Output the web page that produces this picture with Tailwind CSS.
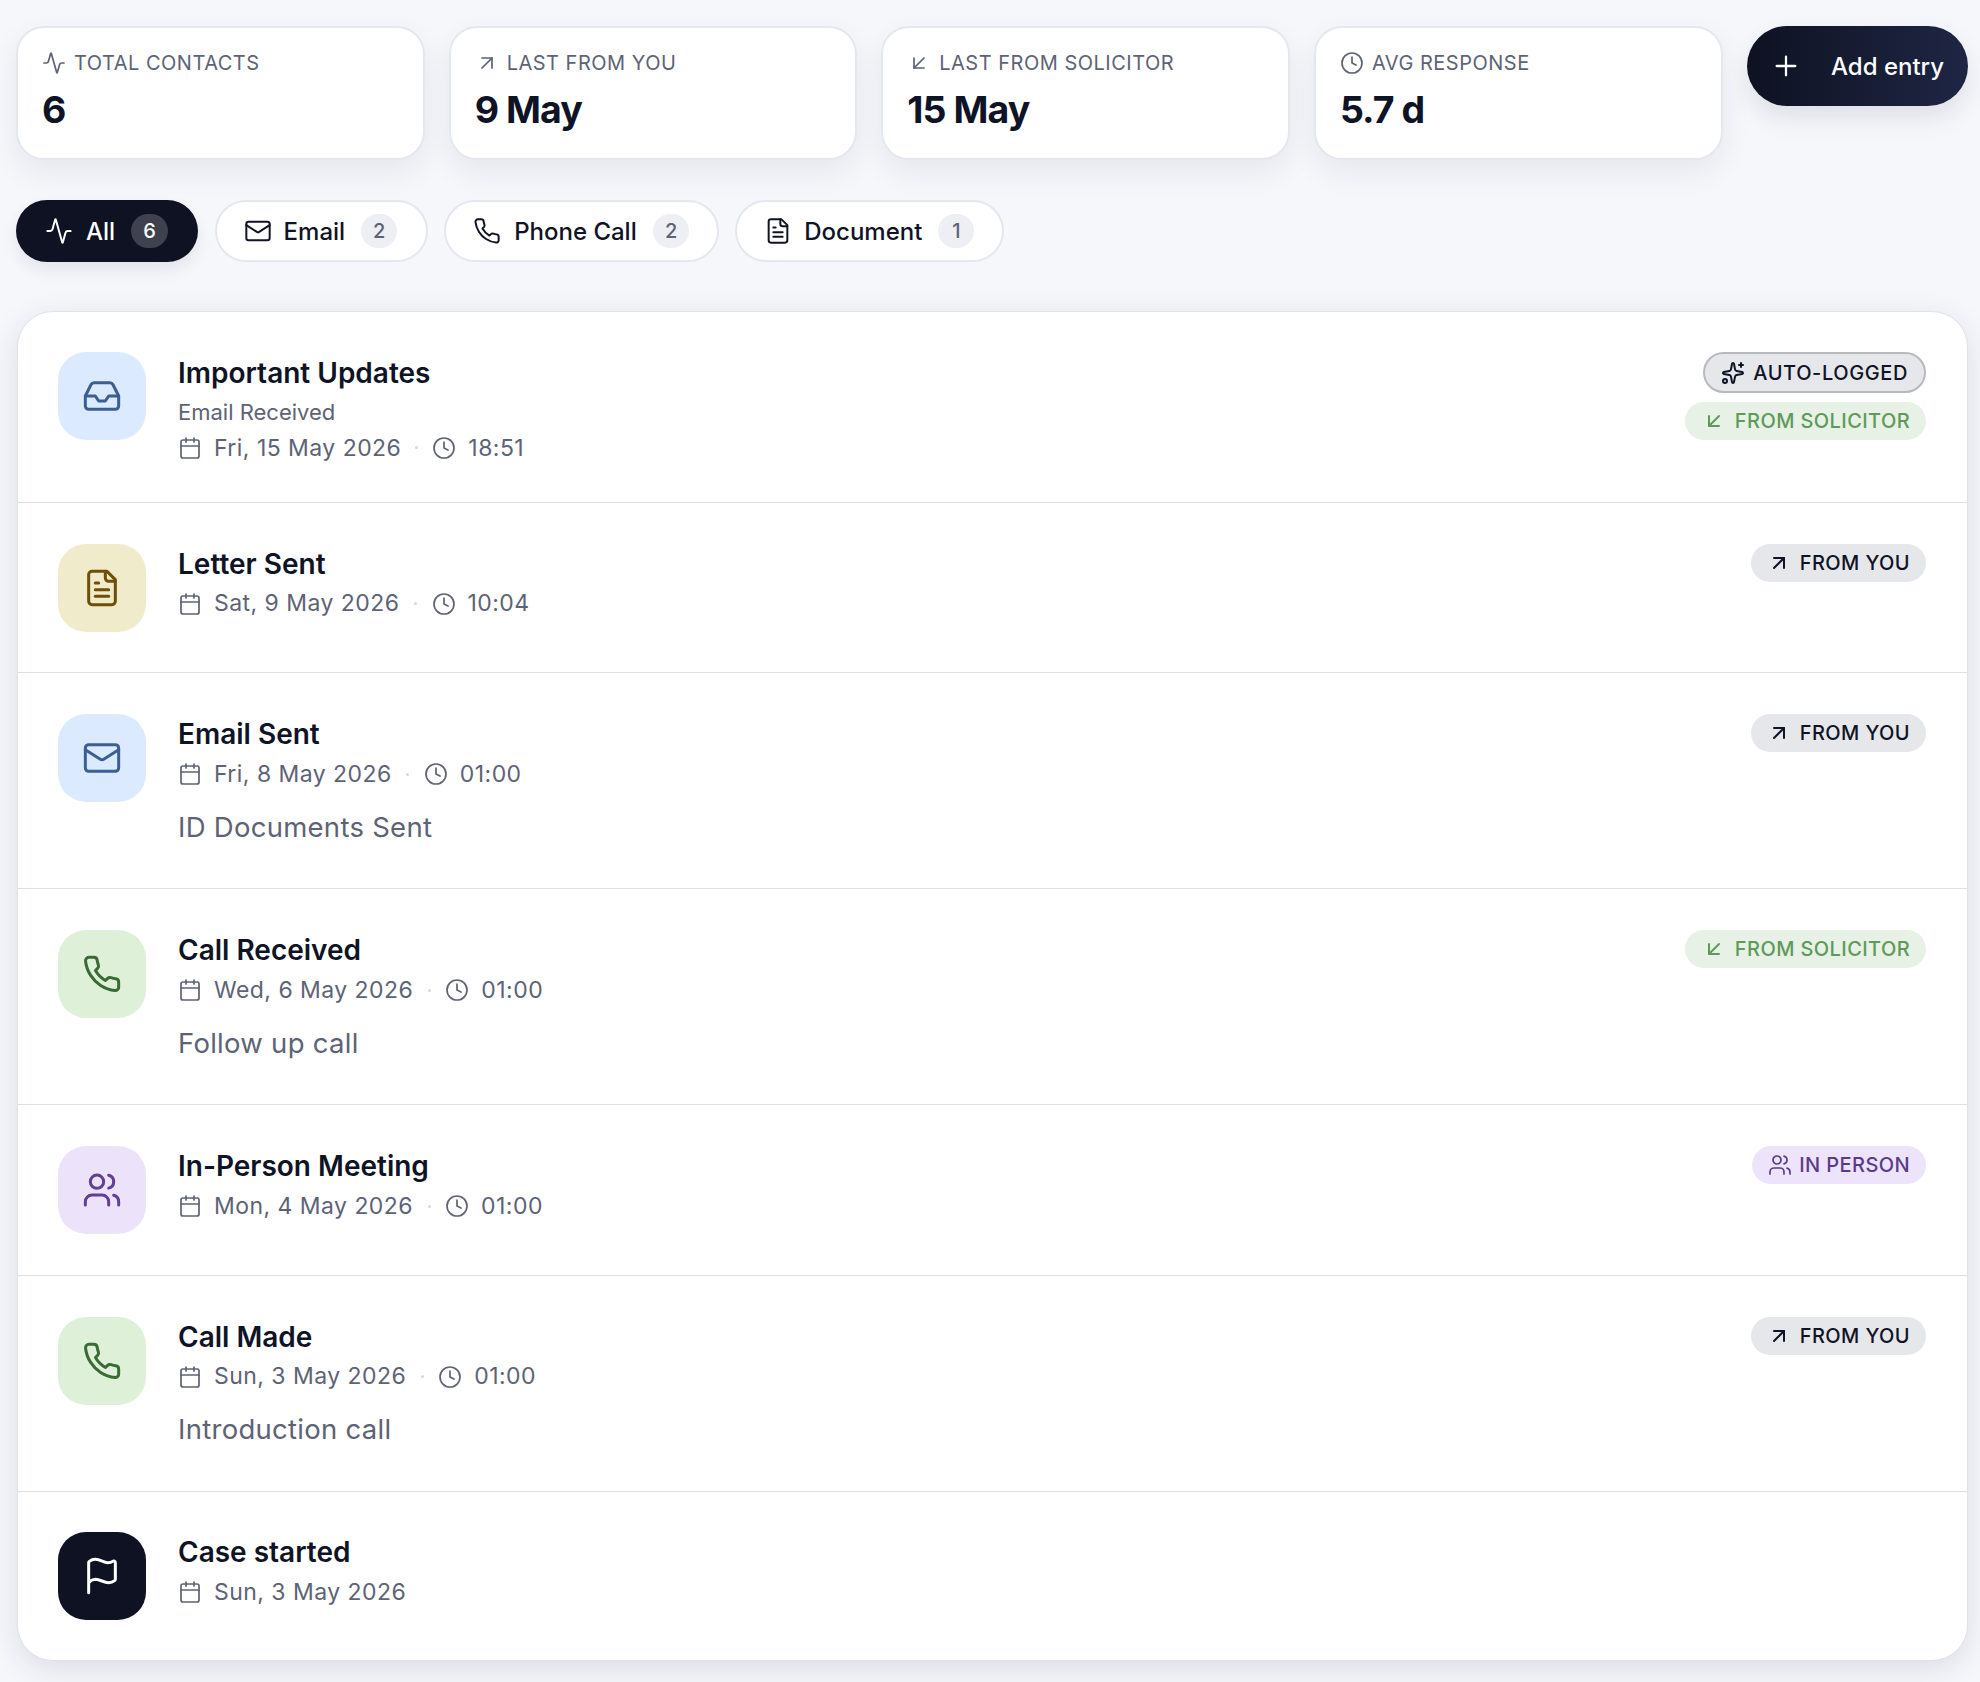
<!doctype html>
<html lang="en">
    <head>
        <meta charset="UTF-8" />
        <title>Contact log</title>
        <script src="https://cdn.jsdelivr.net/npm/@tailwindcss/browser@4"></script>
    </head>
    <body class="bg-[#f6f7fb] font-['Inter',sans-serif] text-[#0f1326]">
        <!-- Icon sprite -->
        <svg class="hidden">
            <defs>
                <symbol id="i-activity" viewBox="0 0 24 24"><path d="M22 12h-2.48a2 2 0 0 0-1.93 1.46l-2.35 8.36a.25.25 0 0 1-.48 0L9.24 2.18a.25.25 0 0 0-.48 0l-2.35 8.36A2 2 0 0 1 4.49 12H2" /></symbol>
                <symbol id="i-up" viewBox="0 0 24 24"><path d="M7 7h10v10" /><path d="M7 17 17 7" /></symbol>
                <symbol id="i-down" viewBox="0 0 24 24"><path d="M17 7 7 17" /><path d="M17 17H7V7" /></symbol>
                <symbol id="i-clock" viewBox="0 0 24 24"><circle cx="12" cy="12" r="10" /><path d="M12 6v6l4 2" /></symbol>
                <symbol id="i-plus" viewBox="0 0 24 24"><path d="M5 12h14" /><path d="M12 5v14" /></symbol>
                <symbol id="i-mail" viewBox="0 0 24 24"><rect x="2" y="4" width="20" height="16" rx="2" /><path d="m22 7-8.97 5.7a1.94 1.94 0 0 1-2.06 0L2 7" /></symbol>
                <symbol id="i-phone" viewBox="0 0 24 24"><path d="M22 16.92v3a2 2 0 0 1-2.18 2 19.79 19.79 0 0 1-8.63-3.07 19.5 19.5 0 0 1-6-6 19.79 19.79 0 0 1-3.07-8.67A2 2 0 0 1 4.11 2h3a2 2 0 0 1 2 1.72 12.84 12.84 0 0 0 .7 2.81 2 2 0 0 1-.45 2.11L8.09 9.91a16 16 0 0 0 6 6l1.27-1.27a2 2 0 0 1 2.11-.45 12.84 12.84 0 0 0 2.81.7A2 2 0 0 1 22 16.92z" /></symbol>
                <symbol id="i-file" viewBox="0 0 24 24"><path d="M15 2H6a2 2 0 0 0-2 2v16a2 2 0 0 0 2 2h12a2 2 0 0 0 2-2V7Z" /><path d="M14 2v4a2 2 0 0 0 2 2h4" /><path d="M10 9H8" /><path d="M16 13H8" /><path d="M16 17H8" /></symbol>
                <symbol id="i-inbox" viewBox="0 0 24 24"><polyline points="22 12 16 12 14 15 10 15 8 12 2 12" /><path d="M5.45 5.11 2 12v6a2 2 0 0 0 2 2h16a2 2 0 0 0 2-2v-6l-3.45-6.89A2 2 0 0 0 16.76 4H7.24a2 2 0 0 0-1.79 1.11z" /></symbol>
                <symbol id="i-calendar" viewBox="0 0 24 24"><path d="M8 2v4" /><path d="M16 2v4" /><rect x="3" y="4" width="18" height="18" rx="2" /><path d="M3 10h18" /></symbol>
                <symbol id="i-sparkles" viewBox="0 0 24 24"><path d="M11.017 2.814a1 1 0 0 1 1.966 0l1.051 5.558a2 2 0 0 0 1.594 1.594l5.558 1.051a1 1 0 0 1 0 1.966l-5.558 1.051a2 2 0 0 0-1.594 1.594l-1.051 5.558a1 1 0 0 1-1.966 0l-1.051-5.558a2 2 0 0 0-1.594-1.594l-5.558-1.051a1 1 0 0 1 0-1.966l5.558-1.051a2 2 0 0 0 1.594-1.594z" /><path d="M20 2v4" /><path d="M22 4h-4" /><circle cx="4" cy="20" r="2" /></symbol>
                <symbol id="i-users" viewBox="0 0 24 24"><path d="M16 21v-2a4 4 0 0 0-4-4H6a4 4 0 0 0-4 4v2" /><circle cx="9" cy="7" r="4" /><path d="M22 21v-2a4 4 0 0 0-3-3.87" /><path d="M16 3.13a4 4 0 0 1 0 7.75" /></symbol>
                <symbol id="i-flag" viewBox="0 0 24 24"><path d="M4 22V4a1 1 0 0 1 .4-.8A6 6 0 0 1 8 2c3 0 5 2 7.333 2q2 0 3.067-.8A1 1 0 0 1 20 4v10a1 1 0 0 1-.4.8A6 6 0 0 1 16 16c-3 0-5-2-8-2a6 6 0 0 0-4 2" /></symbol>
            </defs>
        </svg>

        <div class="pt-[26px] pr-[12px] pb-[22px] pl-[16px]">
            <!-- Stats -->
            <div class="flex items-start gap-[24.5px]">
                <div class="grid flex-1 grid-cols-4 gap-[24px]">
                    <div class="h-[134px] rounded-[28px] border-2 border-[#e5e7ee] bg-white px-[24px] pt-[23px] shadow-[0_12px_30px_rgba(20,25,50,0.07)]">
                        <div class="flex h-[24px] items-center gap-[8px] text-[20px] tracking-[0.025em] text-[#5d6375]">
                            <svg class="h-6 w-6 fill-none stroke-current stroke-[1.7]" stroke-linecap="round" stroke-linejoin="round"><use href="#i-activity" /></svg>
                            <span>TOTAL CONTACTS</span>
                        </div>
                        <div class="mt-[12px] text-[37.5px] leading-[46px] font-bold tracking-tight">6</div>
                    </div>
                    <div class="h-[134px] rounded-[28px] border-2 border-[#e5e7ee] bg-white px-[24px] pt-[23px] shadow-[0_12px_30px_rgba(20,25,50,0.07)]">
                        <div class="flex h-[24px] items-center gap-[8px] text-[20px] tracking-[0.025em] text-[#5d6375]">
                            <svg class="h-6 w-6 fill-none stroke-current stroke-[1.7]" stroke-linecap="round" stroke-linejoin="round"><use href="#i-up" /></svg>
                            <span>LAST FROM YOU</span>
                        </div>
                        <div class="mt-[12px] text-[37.5px] leading-[46px] font-bold tracking-tight">9 May</div>
                    </div>
                    <div class="h-[134px] rounded-[28px] border-2 border-[#e5e7ee] bg-white px-[24px] pt-[23px] shadow-[0_12px_30px_rgba(20,25,50,0.07)]">
                        <div class="flex h-[24px] items-center gap-[8px] text-[20px] tracking-[0.025em] text-[#5d6375]">
                            <svg class="h-6 w-6 fill-none stroke-current stroke-[1.7]" stroke-linecap="round" stroke-linejoin="round"><use href="#i-down" /></svg>
                            <span>LAST FROM SOLICITOR</span>
                        </div>
                        <div class="mt-[12px] text-[37.5px] leading-[46px] font-bold tracking-tight">15 May</div>
                    </div>
                    <div class="h-[134px] rounded-[28px] border-2 border-[#e5e7ee] bg-white px-[24px] pt-[23px] shadow-[0_12px_30px_rgba(20,25,50,0.07)]">
                        <div class="flex h-[24px] items-center gap-[8px] text-[20px] tracking-[0.025em] text-[#5d6375]">
                            <svg class="h-6 w-6 fill-none stroke-current stroke-[1.7]" stroke-linecap="round" stroke-linejoin="round"><use href="#i-clock" /></svg>
                            <span>AVG RESPONSE</span>
                        </div>
                        <div class="mt-[12px] text-[37.5px] leading-[46px] font-bold tracking-tight">5.7 d</div>
                    </div>
                </div>
                <button class="flex h-[80px] w-[221px] items-center gap-[29px] rounded-[40px] bg-gradient-to-r from-[#0e1222] to-[#1f2644] pl-[23px] text-[24px] font-medium text-white shadow-[0_12px_24px_rgba(20,25,50,0.10)]">
                    <svg class="h-8 w-8 fill-none stroke-current stroke-[1.7]" stroke-linecap="round" stroke-linejoin="round"><use href="#i-plus" /></svg>
                    <span class="pt-px">Add entry</span>
                </button>
            </div>

            <!-- Filters -->
            <div class="mt-[40px] flex items-center gap-[16.5px] text-[24px] font-medium">
                <div class="flex h-[62px] items-center rounded-full bg-[#0e1222] pr-[30px] pl-[29px] text-white shadow-[0_8px_16px_rgba(20,25,50,0.08)]">
                    <svg class="h-7 w-7 fill-none stroke-current stroke-[1.7]" stroke-linecap="round" stroke-linejoin="round"><use href="#i-activity" /></svg>
                    <span class="ml-[13px] pt-px">All</span>
                    <span class="ml-[16px] flex h-[34px] w-[37px] items-center justify-center rounded-full bg-[#3f424e] text-[20px]">6</span>
                </div>
                <div class="flex h-[62px] items-center rounded-full border-2 border-[#e5e7ee] bg-white pr-[28.5px] pl-[27px]">
                    <svg class="h-7 w-7 fill-none stroke-current stroke-[1.7]" stroke-linecap="round" stroke-linejoin="round"><use href="#i-mail" /></svg>
                    <span class="ml-[12px] pt-px">Email</span>
                    <span class="ml-[16px] flex h-[34px] w-[36px] items-center justify-center rounded-full bg-[#eeeff4] text-[20px] text-[#5d6375]">2</span>
                </div>
                <div class="flex h-[62px] items-center rounded-full border-2 border-[#e5e7ee] bg-white pr-[27.5px] pl-[27px]">
                    <svg class="h-7 w-7 fill-none stroke-current stroke-[1.7]" stroke-linecap="round" stroke-linejoin="round"><use href="#i-phone" /></svg>
                    <span class="ml-[13px] pt-px">Phone Call</span>
                    <span class="ml-[16.5px] flex h-[34px] w-[36px] items-center justify-center rounded-full bg-[#eeeff4] text-[20px] text-[#5d6375]">2</span>
                </div>
                <div class="flex h-[62px] items-center rounded-full border-2 border-[#e5e7ee] bg-white pr-[28px] pl-[27px]">
                    <svg class="h-7 w-7 fill-none stroke-current stroke-[1.7]" stroke-linecap="round" stroke-linejoin="round"><use href="#i-file" /></svg>
                    <span class="ml-[12px] pt-px">Document</span>
                    <span class="ml-[16px] flex h-[34px] w-[36px] items-center justify-center rounded-full bg-[#eeeff4] text-[20px] text-[#5d6375]">1</span>
                </div>
            </div>

            <!-- Timeline -->
            <div class="mt-[49px] ml-px divide-y divide-[#dcdfe9] rounded-[36px] border border-[#dfe2ea] bg-white shadow-[0_8px_30px_rgba(30,40,80,0.12)]">
                <div class="flex items-start pt-[40px] pr-[41px] pb-[39px] pl-[40px]">
                    <div class="flex h-[88px] w-[88px] shrink-0 items-center justify-center rounded-[28px] bg-[#dbeafe] text-[#3b5f94]">
                        <svg class="h-10 w-10 fill-none stroke-current stroke-[1.8]" stroke-linecap="round" stroke-linejoin="round"><use href="#i-inbox" /></svg>
                    </div>
                    <div class="ml-[32px] flex-1 pt-[0.75px]">
                        <div class="text-[28px] leading-[40px] font-semibold">Important Updates</div>
                        <div class="mt-[6px] text-[22px] leading-[26px] text-[#5d6375]">Email Received</div>
                        <div class="mt-[8px] flex h-[30px] items-center text-[23px] tracking-[0.02em] text-[#5d6375]">
                            <svg class="h-6 w-6 fill-none stroke-current stroke-[1.7]" stroke-linecap="round" stroke-linejoin="round"><use href="#i-calendar" /></svg>
                            <span class="ml-3">Fri, 15 May 2026</span>
                            <span class="mx-[14px] h-[3px] w-[3px] rounded-full bg-[#d6d8df]"></span>
                            <svg class="h-6 w-6 fill-none stroke-current stroke-[1.7]" stroke-linecap="round" stroke-linejoin="round"><use href="#i-clock" /></svg>
                            <span class="ml-3">18:51</span>
                        </div>
                    </div>
                    <div class="flex flex-col items-end gap-[9px]">
                        <span class="flex h-[41px] items-center gap-2 rounded-full border-2 border-[#b8b9be] bg-[#e6e7ea] pr-[16px] pl-[16px] text-[20px] font-medium tracking-[0.03em]">
                            <svg class="h-6 w-6 fill-none stroke-current stroke-2" stroke-linecap="round" stroke-linejoin="round"><use href="#i-sparkles" /></svg>
                            AUTO-LOGGED
                        </span>
                        <span class="flex h-[38px] items-center gap-[9px] rounded-full bg-[#e8f1e6] pr-[16px] pl-[16.5px] text-[20px] font-medium tracking-[0.02em] text-[#5f9a5a]">
                            <svg class="h-6 w-6 fill-none stroke-current stroke-2" stroke-linecap="round" stroke-linejoin="round"><use href="#i-down" /></svg>
                            FROM SOLICITOR
                        </span>
                    </div>
                </div>

                <div class="flex items-start py-[40.75px] pr-[41px] pl-[40px]">
                    <div class="flex h-[88px] w-[88px] shrink-0 items-center justify-center rounded-[28px] bg-[#f0ebca] text-[#6f4e05]">
                        <svg class="h-10 w-10 fill-none stroke-current stroke-[1.8]" stroke-linecap="round" stroke-linejoin="round"><use href="#i-file" /></svg>
                    </div>
                    <div class="ml-[32px] flex-1">
                        <div class="text-[28px] leading-[40px] font-semibold">Letter Sent</div>
                        <div class="mt-[5px] flex h-[30px] items-center text-[23px] tracking-[0.02em] text-[#5d6375]">
                            <svg class="h-6 w-6 fill-none stroke-current stroke-[1.7]" stroke-linecap="round" stroke-linejoin="round"><use href="#i-calendar" /></svg>
                            <span class="ml-3">Sat, 9 May 2026</span>
                            <span class="mx-[14.5px] h-[3px] w-[3px] rounded-full bg-[#d6d8df]"></span>
                            <svg class="h-6 w-6 fill-none stroke-current stroke-[1.7]" stroke-linecap="round" stroke-linejoin="round"><use href="#i-clock" /></svg>
                            <span class="ml-3">10:04</span>
                        </div>
                    </div>
                    <span class="flex h-[38px] items-center gap-[9px] rounded-full bg-[#e6e7ea] pr-[16px] pl-[16px] text-[20px] font-medium tracking-[0.02em]">
                        <svg class="h-6 w-6 fill-none stroke-current stroke-2" stroke-linecap="round" stroke-linejoin="round"><use href="#i-up" /></svg>
                        FROM YOU
                    </span>
                </div>

                <div class="flex items-start py-[40.75px] pr-[41px] pl-[40px]">
                    <div class="flex h-[88px] w-[88px] shrink-0 items-center justify-center rounded-[28px] bg-[#dbeafe] text-[#3b5f94]">
                        <svg class="h-10 w-10 fill-none stroke-current stroke-[1.8]" stroke-linecap="round" stroke-linejoin="round"><use href="#i-mail" /></svg>
                    </div>
                    <div class="ml-[32px] flex-1">
                        <div class="text-[28px] leading-[40px] font-semibold">Email Sent</div>
                        <div class="mt-[5px] flex h-[30px] items-center text-[23px] tracking-[0.02em] text-[#5d6375]">
                            <svg class="h-6 w-6 fill-none stroke-current stroke-[1.7]" stroke-linecap="round" stroke-linejoin="round"><use href="#i-calendar" /></svg>
                            <span class="ml-3">Fri, 8 May 2026</span>
                            <span class="mx-[14.5px] h-[3px] w-[3px] rounded-full bg-[#d6d8df]"></span>
                            <svg class="h-6 w-6 fill-none stroke-current stroke-[1.7]" stroke-linecap="round" stroke-linejoin="round"><use href="#i-clock" /></svg>
                            <span class="ml-3">01:00</span>
                        </div>
                        <div class="mt-[16.5px] text-[27.5px] leading-[42px] tracking-[0.01em] text-[#5d6375]">ID Documents Sent</div>
                    </div>
                    <span class="flex h-[38px] items-center gap-[9px] rounded-full bg-[#e6e7ea] pr-[16px] pl-[16px] text-[20px] font-medium tracking-[0.02em]">
                        <svg class="h-6 w-6 fill-none stroke-current stroke-2" stroke-linecap="round" stroke-linejoin="round"><use href="#i-up" /></svg>
                        FROM YOU
                    </span>
                </div>

                <div class="flex items-start py-[40.75px] pr-[41px] pl-[40px]">
                    <div class="flex h-[88px] w-[88px] shrink-0 items-center justify-center rounded-[28px] bg-[#dff0d8] text-[#3a6b35]">
                        <svg class="h-10 w-10 fill-none stroke-current stroke-[1.8]" stroke-linecap="round" stroke-linejoin="round"><use href="#i-phone" /></svg>
                    </div>
                    <div class="ml-[32px] flex-1">
                        <div class="text-[28px] leading-[40px] font-semibold">Call Received</div>
                        <div class="mt-[5px] flex h-[30px] items-center text-[23px] tracking-[0.02em] text-[#5d6375]">
                            <svg class="h-6 w-6 fill-none stroke-current stroke-[1.7]" stroke-linecap="round" stroke-linejoin="round"><use href="#i-calendar" /></svg>
                            <span class="ml-3">Wed, 6 May 2026</span>
                            <span class="mx-[14.5px] h-[3px] w-[3px] rounded-full bg-[#d6d8df]"></span>
                            <svg class="h-6 w-6 fill-none stroke-current stroke-[1.7]" stroke-linecap="round" stroke-linejoin="round"><use href="#i-clock" /></svg>
                            <span class="ml-3">01:00</span>
                        </div>
                        <div class="mt-[16.5px] text-[27.5px] leading-[42px] tracking-[0.01em] text-[#5d6375]">Follow up call</div>
                    </div>
                    <span class="flex h-[38px] items-center gap-[9px] rounded-full bg-[#e8f1e6] pr-[16px] pl-[16.5px] text-[20px] font-medium tracking-[0.02em] text-[#5f9a5a]">
                        <svg class="h-6 w-6 fill-none stroke-current stroke-2" stroke-linecap="round" stroke-linejoin="round"><use href="#i-down" /></svg>
                        FROM SOLICITOR
                    </span>
                </div>

                <div class="flex items-start py-[40.75px] pr-[41px] pl-[40px]">
                    <div class="flex h-[88px] w-[88px] shrink-0 items-center justify-center rounded-[28px] bg-[#ece3fa] text-[#633f95]">
                        <svg class="h-10 w-10 fill-none stroke-current stroke-[1.8]" stroke-linecap="round" stroke-linejoin="round"><use href="#i-users" /></svg>
                    </div>
                    <div class="ml-[32px] flex-1">
                        <div class="text-[28px] leading-[40px] font-semibold">In-Person Meeting</div>
                        <div class="mt-[5px] flex h-[30px] items-center text-[23px] tracking-[0.02em] text-[#5d6375]">
                            <svg class="h-6 w-6 fill-none stroke-current stroke-[1.7]" stroke-linecap="round" stroke-linejoin="round"><use href="#i-calendar" /></svg>
                            <span class="ml-3">Mon, 4 May 2026</span>
                            <span class="mx-[14.5px] h-[3px] w-[3px] rounded-full bg-[#d6d8df]"></span>
                            <svg class="h-6 w-6 fill-none stroke-current stroke-[1.7]" stroke-linecap="round" stroke-linejoin="round"><use href="#i-clock" /></svg>
                            <span class="ml-3">01:00</span>
                        </div>
                    </div>
                    <span class="flex h-[38px] items-center gap-[7px] rounded-full bg-[#ede3fa] pr-[16px] pl-[16px] text-[20px] font-medium tracking-[0.02em] text-[#5b3a8c]">
                        <svg class="h-6 w-6 fill-none stroke-current stroke-[1.7]" stroke-linecap="round" stroke-linejoin="round"><use href="#i-users" /></svg>
                        IN PERSON
                    </span>
                </div>

                <div class="flex items-start py-[40.75px] pr-[41px] pl-[40px]">
                    <div class="flex h-[88px] w-[88px] shrink-0 items-center justify-center rounded-[28px] bg-[#dff0d8] text-[#3a6b35]">
                        <svg class="h-10 w-10 fill-none stroke-current stroke-[1.8]" stroke-linecap="round" stroke-linejoin="round"><use href="#i-phone" /></svg>
                    </div>
                    <div class="ml-[32px] flex-1">
                        <div class="text-[28px] leading-[40px] font-semibold">Call Made</div>
                        <div class="mt-[5px] flex h-[30px] items-center text-[23px] tracking-[0.02em] text-[#5d6375]">
                            <svg class="h-6 w-6 fill-none stroke-current stroke-[1.7]" stroke-linecap="round" stroke-linejoin="round"><use href="#i-calendar" /></svg>
                            <span class="ml-3">Sun, 3 May 2026</span>
                            <span class="mx-[14.5px] h-[3px] w-[3px] rounded-full bg-[#d6d8df]"></span>
                            <svg class="h-6 w-6 fill-none stroke-current stroke-[1.7]" stroke-linecap="round" stroke-linejoin="round"><use href="#i-clock" /></svg>
                            <span class="ml-3">01:00</span>
                        </div>
                        <div class="mt-[16.5px] text-[27.5px] leading-[42px] tracking-[0.01em] text-[#5d6375]">Introduction call</div>
                    </div>
                    <span class="flex h-[38px] items-center gap-[9px] rounded-full bg-[#e6e7ea] pr-[16px] pl-[16px] text-[20px] font-medium tracking-[0.02em]">
                        <svg class="h-6 w-6 fill-none stroke-current stroke-2" stroke-linecap="round" stroke-linejoin="round"><use href="#i-up" /></svg>
                        FROM YOU
                    </span>
                </div>

                <div class="flex items-start py-[40px] pr-[41px] pl-[40px]">
                    <div class="flex h-[88px] w-[88px] shrink-0 items-center justify-center rounded-[28px] bg-[#0e1222] text-white">
                        <svg class="h-10 w-10 fill-none stroke-current stroke-[1.8]" stroke-linecap="round" stroke-linejoin="round"><use href="#i-flag" /></svg>
                    </div>
                    <div class="ml-[32px] flex-1">
                        <div class="text-[28px] leading-[40px] font-semibold">Case started</div>
                        <div class="mt-[5px] flex h-[30px] items-center text-[23px] tracking-[0.02em] text-[#5d6375]">
                            <svg class="h-6 w-6 fill-none stroke-current stroke-[1.7]" stroke-linecap="round" stroke-linejoin="round"><use href="#i-calendar" /></svg>
                            <span class="ml-3">Sun, 3 May 2026</span>
                        </div>
                    </div>
                </div>
            </div>
        </div>
    </body>
</html>
